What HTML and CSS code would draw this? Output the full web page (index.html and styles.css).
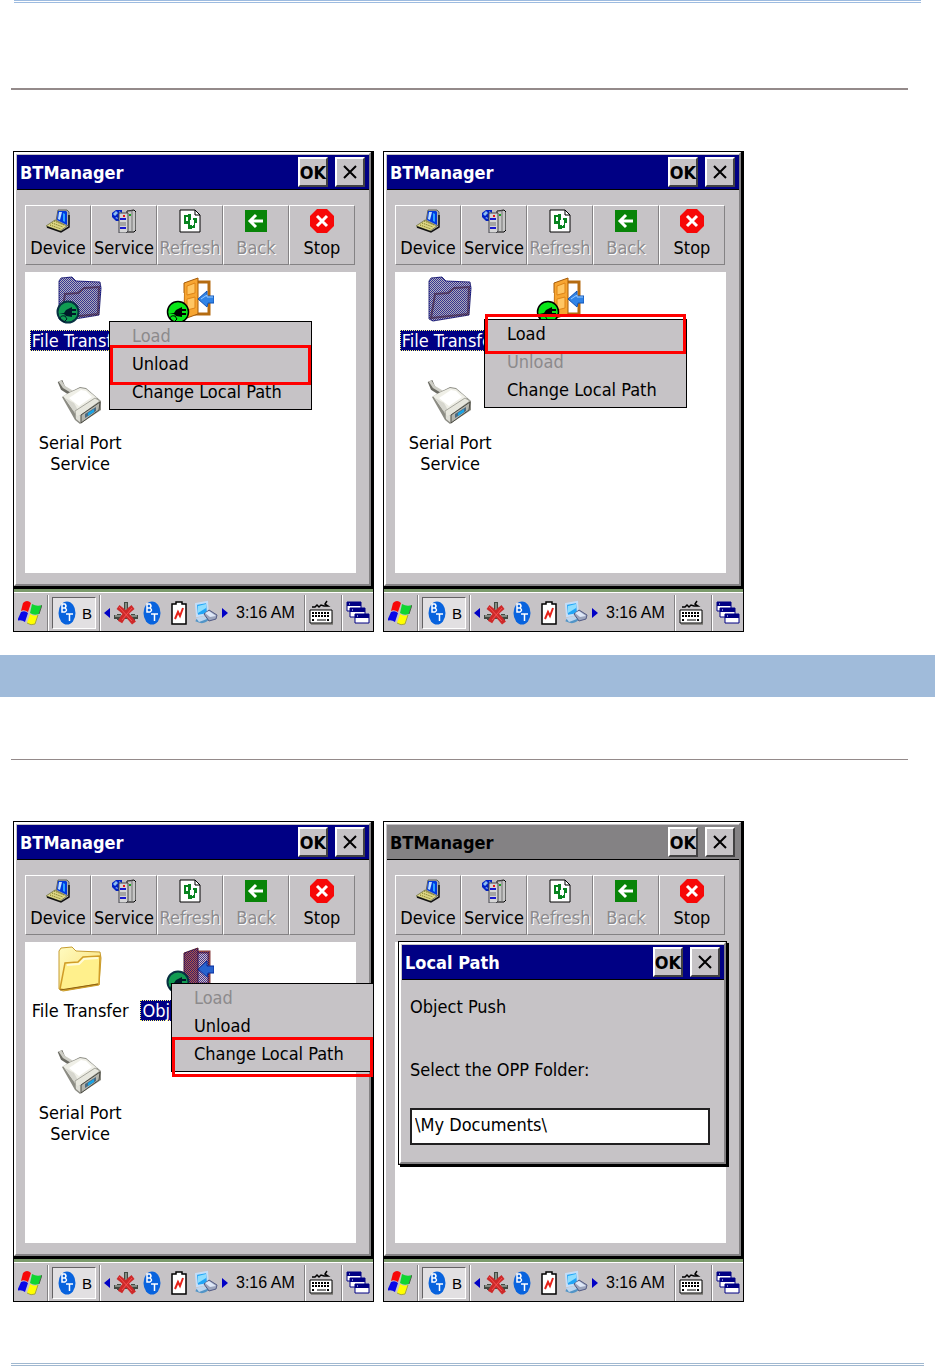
FILE: index.html
```html
<!DOCTYPE html>
<html lang="en">

<head>
  <meta charset="UTF-8">
  <title>BTManager</title>
  <link rel="stylesheet" href="styles.css">
</head>

<body>
  <svg class="defs" width="0" height="0" aria-hidden="true">
    <defs>
      <pattern id="checker" width="4" height="4" patternUnits="userSpaceOnUse">
        <path d="M0 0h1v1H0zM2 0h1v1H2zM1 1h1v1H1zM3 1h1v1H3zM0 2h1v1H0zM2 2h1v1H2zM1 3h1v1H1zM3 3h1v1H3z" fill="#000084" fill-opacity=".7" />
      </pattern>
      <linearGradient id="gold" x1="0" y1="0" x2="1" y2="1">
        <stop offset="0" stop-color="#fffbc0" />
        <stop offset="1" stop-color="#f8dc70" />
      </linearGradient>

      <path id="folder-shape" d="M3 5l2-3 11-1 4 4 24 1 1 6-2 27-36 6-4-2z" />
      <path id="door-shape" d="M18 7l14-5v4h11v32H32l-14 4z" />
      <path id="arrow-shape" d="M48 20v7h-6l-1 4-9-8 9-8v5z" />

      <symbol id="plug" viewBox="0 0 24 24">
        <circle cx="12" cy="12" r="10.5" fill="#08e718" stroke="#000" stroke-width="1.5" />
        <path d="M3 13h5l2-3 6-3v2h4v2h-4v2h4v2h-4v2l-6-1-2-2z" fill="#000" />
        <path d="M4 19q0-4 5-3l2 3-3 3z" fill="none" stroke="#000" />
      </symbol>

      <symbol id="plug-selected" viewBox="0 0 24 24">
        <circle cx="12" cy="12" r="10.5" fill="#109c52" stroke="#083142" stroke-width="2" />
        <path d="M3 13h5l2-3 6-3v2h4v2h-4v2h4v2h-4v2l-6-1-2-2z" fill="#001829" />
        <path d="M4 19q0-4 5-3l2 3-3 3z" fill="none" stroke="#001829" />
      </symbol>

      <symbol id="folder" viewBox="0 0 48 48">
        <use href="#folder-shape" fill="url(#gold)" stroke="#c69c30" />
        <path d="M4 43l5-26 13-1 5-5 17-1-1 28-34 6z" fill="#fff08c" stroke="#d09c28" stroke-width="1.5" />
        <path d="M11 19l12-1 5-5 14-1" fill="none" stroke="#fffbd8" stroke-width="2" />
        <path d="M4 44l38-6" stroke="#8c6010" />
      </symbol>

      <symbol id="folder-selected" viewBox="0 0 48 48">
        <use href="#folder-shape" fill="#b5b2bd" stroke="#31317b" />
        <path d="M5 42l4-24 13-1 6-5 15-1-1 27z" fill="#adaab5" stroke="#7b5a52" stroke-width="2" />
        <use href="#folder-shape" fill="url(#checker)" shape-rendering="crispEdges" />
      </symbol>

      <symbol id="door" viewBox="0 0 48 48">
        <path d="M30 6h13v32H30z" fill="#fff" stroke="#b56b10" stroke-width="3" />
        <path d="M18 7l14-5v36l-14 5z" fill="#f7a531" stroke="#a55a08" />
        <path d="M21 10l8-3v10l-8 2zM21 23l8-2v11l-8 2z" fill="#ffc663" stroke="#de8418" />
        <path d="M17 17l-1 22" stroke="#fff" stroke-width="2" />
        <use href="#arrow-shape" fill="#3184e7" stroke="#1052b5" />
        <path d="M35 23l6-4v2h6" fill="none" stroke="#9cceff" />
      </symbol>

      <symbol id="door-selected" viewBox="0 0 48 48">
        <path d="M30 6h13v32H30z" fill="#d6bcc0" stroke="#8a4042" stroke-width="3" />
        <path d="M18 7l14-5v36l-14 5z" fill="#b55a42" stroke="#4a1831" />
        <use href="#door-shape" fill="url(#checker)" shape-rendering="crispEdges" />
        <use href="#arrow-shape" fill="#2963ce" stroke="#082c9c" />
      </symbol>

      <symbol id="serial" viewBox="0 0 48 48">
        <path d="M4 3l3 7 9 6" fill="none" stroke="#6b6b63" stroke-width="5" />
        <path d="M4 3l4 6 10 6" fill="none" stroke="#cecec6" stroke-width="3" />
        <path d="M6 19l8-5 10-5 6 1 15 13v9L24 46l-5-4z" fill="#8c8c84" />
        <path d="M7 18l8-4 9-4 6 1 11 9-17 13-7-1z" fill="#efefe7" />
        <path d="M13 20l12-8 5 1 6 6-13 9z" fill="#fff" />
        <path d="M9 20l11 17 3-3-5-9z" fill="#d6d6ce" />
        <path d="M19 33l20-13 5 3-19 14-5 3z" fill="#e7e7de" stroke="#a5a59c" />
        <path d="M20 38l5-1v8l-5-4z" fill="#deded6" />
        <path d="M25 37l19-13-1 8-18 13z" fill="#b5b5ad" stroke="#4a4a42" />
        <path d="M29 36l11-7v4l-11 7z" fill="#4a6b84" />
        <path d="M32 35l6-4v3l-6 4z" fill="#18a5e7" />
      </symbol>

      <symbol id="device" viewBox="0 0 24 24">
        <path d="M12 1h9l2 2v12l-3 3-10-6z" fill="#adadad" stroke="#63635a" />
        <path d="M12 2h8l1 1v13l-10-5z" fill="#0039de" />
        <path d="M13 3h3l-2 8-2-1z" fill="#bddeff" />
        <path d="M17 4l2 1v8l-2-1z" fill="#29a5ff" />
        <path d="M0 17l9-6 12 6-7 5z" fill="#ded684" stroke="#84845a" />
        <path d="M4 16l11 4M6 14l11 4M8 12l10 4" stroke="#6b6b18" stroke-dasharray="1 1" />
        <path d="M1 18l14 5 8-5V6" fill="none" stroke="#101010" stroke-width="1.500" />
      </symbol>

      <symbol id="service" viewBox="0 0 24 24">
        <path d="M0 4l4-3h6v11H4L0 8z" fill="#0021c6" />
        <path d="M1 5l3-3 2 2-3 3zM7 2l3 2-2 2zM3 9l2-1 1 2z" fill="#8cbdef" />
        <path d="M15 2l7-1 2 2v18l-2 2h-7z" fill="#c6c6c6" stroke="#000" />
        <path d="M15 2h5v20" fill="none" stroke="#737373" />
        <path d="M7 4h9v18l-2 2H7z" fill="#d6d6d6" stroke="#42424a" />
        <path d="M8 10h6M8 19h6" stroke="#1818ce" stroke-width="2" />
        <path d="M8 14h6M8 16h6" stroke="#737373" />
        <path d="M11 7h2" stroke="#e71818" stroke-width="2" />
        <path d="M17 6h2" stroke="#18a518" stroke-width="2" />
      </symbol>

      <symbol id="refresh" viewBox="0 0 24 24">
        <path d="M2 1h15l5 5v17H2z" fill="#fff" stroke="#000" />
        <path d="M17 1v5h5z" fill="#fff" stroke="#000" />
        <path d="M12 7H7v7M16 10v8h-5" fill="none" stroke="#088421" stroke-width="2" />
        <path d="M10 5h3v8h-3zM15 9h4v5h-4zM6 12h6v3H6zM10 15h4v5h-4z" fill="#088421" />
        <path d="M12 11h4v5h-4z" fill="#fff" />
      </symbol>

      <symbol id="back" viewBox="0 0 24 24">
        <path d="M1 1h22v22H1z" fill="#088408" />
        <path d="M12 6l-6 6 6 6M7 12h12" fill="none" stroke="#fff" stroke-width="3" />
      </symbol>

      <symbol id="stop" viewBox="0 0 24 24">
        <path d="M7 0h10l7 7v10l-7 7H7l-7-7V7z" fill="#f70808" />
        <path d="M7 7l10 10M17 7L7 17" stroke="#fff" stroke-width="3" />
      </symbol>

      <symbol id="flag" viewBox="0 0 24 26">
        <path d="M5 3q4-4 8 0l-3 9q-4-3-7-1z" fill="#f70808" />
        <path d="M14 4q5 3 10 1l-3 9q-5 2-9-1z" fill="#10d631" />
        <path d="M3 12q4-2 7 1l-3 9q-4-3-8-1z" fill="#0808e7" />
        <path d="M12 14q4 3 8 1l-3 9q-4 2-8-1z" fill="#ffff00" />
        <path d="M20 15l-3 9q-4 2-8-1" fill="none" stroke="#a5a542" />
        <path d="M24 5l-3 9" fill="none" stroke="#52634a" />
      </symbol>

      <symbol id="bt" viewBox="0 0 20 26">
        <ellipse cx="10" cy="13" rx="8.5" ry="11.5" fill="#0863de" />
        <path d="M5 4v8h3q3-2 0-4 2-2 0-4zM5 8h3" fill="none" stroke="#fff" stroke-width="1.500" />
        <path d="M9 14h7M12.500 14v7" fill="none" stroke="#fff" stroke-width="1.500" />
      </symbol>

      <symbol id="network" viewBox="0 0 24 24">
        <path d="M12 1v12M0 16h24M5 13v6M19 13v7" stroke="#424a42" stroke-width="4" />
        <path d="M12 2v11M1 15h22" stroke="#c6cec6" />
        <path d="M4 6q7 5 16 16M19 6q-8 6-13 15" fill="none" stroke="#ce2929" stroke-width="5" />
        <path d="M5 6l13 14M18 7L8 19" stroke="#f75252" />
      </symbol>

      <symbol id="battery" viewBox="0 0 24 26">
        <path d="M10 4V2h6v2h4v20H6V4z" fill="#fff" stroke="#000" stroke-width="1.500" />
        <path d="M9 19l3-7 2 4 3-8" fill="none" stroke="#e72118" stroke-width="2" />
      </symbol>

      <symbol id="computers" viewBox="0 0 24 24">
        <path d="M2 3l11-2 1 12-11 2z" fill="#21a5f7" stroke="#c6def7" stroke-width="2" />
        <path d="M4 5l8-2v4L4 12z" fill="#8cdeff" />
        <path d="M2 19q8 4 12-2l5-2" fill="none" stroke="#5294c6" stroke-width="3" />
        <path d="M10 13l5-4 8 5-1 4-7 2z" fill="#9ca5bd" stroke="#525a84" />
        <path d="M11 12l4-2 7 5-6 1z" fill="#dee7f7" />
        <path d="M2 17l8-2 3 3-8 3z" fill="#bdd6ef" />
      </symbol>

      <symbol id="keyboard" viewBox="0 0 24 26">
        <path d="M3 7h3l2-2 2 2 2-2 3 1h4l-3-2 2-3" fill="none" stroke="#000" stroke-width="1.500" />
        <path d="M1 10h22v13H1z" fill="#fff" stroke="#000" />
        <path d="M3 13h18M3 16h18M3 20h3M18 20h3" stroke="#000" stroke-width="2" stroke-dasharray="2 1" />
        <path d="M8 20h9" stroke="#000" />
        <path d="M2 24h22V12" fill="none" stroke="#52524a" />
      </symbol>

      <symbol id="desktop" viewBox="0 0 24 24">
        <path d="M1 1h14v9H1z" fill="#fff" stroke="#000084" />
        <path d="M1 1h14v4H1z" fill="#000084" />
        <path d="M4 7h15v9H4z" fill="#fff" stroke="#000084" />
        <path d="M4 7h15v4H4z" fill="#000084" />
        <path d="M9 13h14v9H9z" fill="#fff" stroke="#000084" />
        <path d="M9 13h14v4H9z" fill="#000084" />
        <path d="M3 3h1M6 9h1M11 15h1" stroke="#fff" />
      </symbol>

      <symbol id="close" viewBox="0 0 16 16">
        <path d="M2 2l12 12M14 2L2 14" stroke="#000" stroke-width="2" />
      </symbol>
    </defs>
  </svg>

  <header class="page-rule"></header>

  <main>
    <section class="step step-first">
      <hr class="thick">
      <div class="screens">

        <!-- File Transfer loaded -->
        <div class="screen">
          <div class="window">
            <div class="titlebar">
              <h2>BTManager</h2>
              <button class="caption">OK</button>
              <button class="caption" aria-label="Close"><svg><use href="#close" /></svg></button>
            </div>
            <div class="content">
              <div class="toolbar">
                <button><svg><use href="#device" /></svg>Device</button>
                <button><svg><use href="#service" /></svg>Service</button>
                <button disabled><svg><use href="#refresh" /></svg>Refresh</button>
                <button disabled><svg><use href="#back" /></svg>Back</button>
                <button><svg><use href="#stop" /></svg>Stop</button>
              </div>
              <ul class="services">
                <li class="selected">
                  <svg class="icon"><use href="#folder-selected" /></svg>
                  <svg class="badge"><use href="#plug-selected" /></svg>
                  <span>File Transfer</span>
                </li>
                <li>
                  <svg class="icon"><use href="#door" /></svg>
                  <svg class="badge"><use href="#plug" /></svg>
                </li>
                <li><svg class="icon"><use href="#serial" /></svg><span>Serial Port Service</span></li>
              </ul>
            </div>
          </div>
          <div class="taskbar">
            <button class="start" aria-label="Start"><svg><use href="#flag" /></svg></button>
            <div class="tasks"><button class="task"><svg><use href="#bt" /></svg>B</button></div>
            <div class="tray">
              <i class="arrow arrow-left"></i>
              <svg><use href="#network" /></svg>
              <svg class="narrow"><use href="#bt" /></svg>
              <svg><use href="#battery" /></svg>
              <svg><use href="#computers" /></svg>
              <i class="arrow arrow-right"></i>
              <time>3:16 AM</time>
            </div>
            <button class="tool" aria-label="Input panel"><svg><use href="#keyboard" /></svg></button>
            <button class="tool" aria-label="Desktop"><svg><use href="#desktop" /></svg></button>
          </div>
          <div class="menu menu-unload">
            <button disabled>Load</button>
            <button>Unload</button>
            <button>Change Local Path</button>
            <i class="marker"></i>
          </div>
        </div>

        <!-- File Transfer not loaded -->
        <div class="screen">
          <div class="window">
            <div class="titlebar">
              <h2>BTManager</h2>
              <button class="caption">OK</button>
              <button class="caption" aria-label="Close"><svg><use href="#close" /></svg></button>
            </div>
            <div class="content">
              <div class="toolbar">
                <button><svg><use href="#device" /></svg>Device</button>
                <button><svg><use href="#service" /></svg>Service</button>
                <button disabled><svg><use href="#refresh" /></svg>Refresh</button>
                <button disabled><svg><use href="#back" /></svg>Back</button>
                <button><svg><use href="#stop" /></svg>Stop</button>
              </div>
              <ul class="services">
                <li class="selected"><svg class="icon"><use href="#folder-selected" /></svg><span>File Transfer</span></li>
                <li>
                  <svg class="icon"><use href="#door" /></svg>
                  <svg class="badge"><use href="#plug" /></svg>
                </li>
                <li><svg class="icon"><use href="#serial" /></svg><span>Serial Port Service</span></li>
              </ul>
            </div>
          </div>
          <div class="taskbar">
            <button class="start" aria-label="Start"><svg><use href="#flag" /></svg></button>
            <div class="tasks"><button class="task"><svg><use href="#bt" /></svg>B</button></div>
            <div class="tray">
              <i class="arrow arrow-left"></i>
              <svg><use href="#network" /></svg>
              <svg class="narrow"><use href="#bt" /></svg>
              <svg><use href="#battery" /></svg>
              <svg><use href="#computers" /></svg>
              <i class="arrow arrow-right"></i>
              <time>3:16 AM</time>
            </div>
            <button class="tool" aria-label="Input panel"><svg><use href="#keyboard" /></svg></button>
            <button class="tool" aria-label="Desktop"><svg><use href="#desktop" /></svg></button>
          </div>
          <div class="menu menu-load">
            <button>Load</button>
            <button disabled>Unload</button>
            <button>Change Local Path</button>
            <i class="marker"></i>
          </div>
        </div>

      </div>
    </section>

    <div class="band"></div>

    <section class="step">
      <hr>
      <div class="screens">

        <!-- Object Push menu -->
        <div class="screen">
          <div class="window">
            <div class="titlebar">
              <h2>BTManager</h2>
              <button class="caption">OK</button>
              <button class="caption" aria-label="Close"><svg><use href="#close" /></svg></button>
            </div>
            <div class="content">
              <div class="toolbar">
                <button><svg><use href="#device" /></svg>Device</button>
                <button><svg><use href="#service" /></svg>Service</button>
                <button disabled><svg><use href="#refresh" /></svg>Refresh</button>
                <button disabled><svg><use href="#back" /></svg>Back</button>
                <button><svg><use href="#stop" /></svg>Stop</button>
              </div>
              <ul class="services">
                <li><svg class="icon"><use href="#folder" /></svg><span>File Transfer</span></li>
                <li class="selected">
                  <svg class="icon"><use href="#door-selected" /></svg>
                  <svg class="badge"><use href="#plug-selected" /></svg>
                  <span class="covered">Obj</span>
                </li>
                <li><svg class="icon"><use href="#serial" /></svg><span>Serial Port Service</span></li>
              </ul>
            </div>
          </div>
          <div class="taskbar">
            <button class="start" aria-label="Start"><svg><use href="#flag" /></svg></button>
            <div class="tasks"><button class="task"><svg><use href="#bt" /></svg>B</button></div>
            <div class="tray">
              <i class="arrow arrow-left"></i>
              <svg><use href="#network" /></svg>
              <svg class="narrow"><use href="#bt" /></svg>
              <svg><use href="#battery" /></svg>
              <svg><use href="#computers" /></svg>
              <i class="arrow arrow-right"></i>
              <time>3:16 AM</time>
            </div>
            <button class="tool" aria-label="Input panel"><svg><use href="#keyboard" /></svg></button>
            <button class="tool" aria-label="Desktop"><svg><use href="#desktop" /></svg></button>
          </div>
          <div class="menu menu-path">
            <button disabled>Load</button>
            <button>Unload</button>
            <button>Change Local Path</button>
            <i class="marker"></i>
          </div>
        </div>

        <!-- Local Path dialog -->
        <div class="screen">
          <div class="window">
            <div class="titlebar inactive">
              <h2>BTManager</h2>
              <button class="caption">OK</button>
              <button class="caption" aria-label="Close"><svg><use href="#close" /></svg></button>
            </div>
            <div class="content">
              <div class="toolbar">
                <button><svg><use href="#device" /></svg>Device</button>
                <button><svg><use href="#service" /></svg>Service</button>
                <button disabled><svg><use href="#refresh" /></svg>Refresh</button>
                <button disabled><svg><use href="#back" /></svg>Back</button>
                <button><svg><use href="#stop" /></svg>Stop</button>
              </div>
              <ul class="services"></ul>
            </div>
          </div>
          <div class="taskbar">
            <button class="start" aria-label="Start"><svg><use href="#flag" /></svg></button>
            <div class="tasks"><button class="task"><svg><use href="#bt" /></svg>B</button></div>
            <div class="tray">
              <i class="arrow arrow-left"></i>
              <svg><use href="#network" /></svg>
              <svg class="narrow"><use href="#bt" /></svg>
              <svg><use href="#battery" /></svg>
              <svg><use href="#computers" /></svg>
              <i class="arrow arrow-right"></i>
              <time>3:16 AM</time>
            </div>
            <button class="tool" aria-label="Input panel"><svg><use href="#keyboard" /></svg></button>
            <button class="tool" aria-label="Desktop"><svg><use href="#desktop" /></svg></button>
          </div>
          <form class="window dialog">
            <div class="titlebar">
              <h2>Local Path</h2>
              <button type="button" class="caption">OK</button>
              <button type="button" class="caption" aria-label="Close"><svg><use href="#close" /></svg></button>
            </div>
            <div class="fields">
              <p>Object Push</p>
              <label for="opp-folder">Select the OPP Folder:</label>
              <input type="text" id="opp-folder" value="\My Documents\">
            </div>
          </form>
        </div>

      </div>
    </section>
  </main>

  <footer class="page-rule"></footer>
</body>

</html>
```

FILE: styles.css
```css
* {
  box-sizing: border-box;
}

body {
  margin: 0;
  background: #fff;
  color: #000;
  font-family: "DejaVu Sans Condensed", "Noto Sans", sans-serif;
  font-size: 18px;
  line-height: 21px;
}

button,
input {
  font: inherit;
  color: inherit;
}

button {
  margin: 0;
  padding: 0;
  border: 0;
  background: none;
}

svg {
  display: block;
  width: 24px;
  height: 24px;
  overflow: visible;
}

.defs {
  position: absolute;
  width: 0;
  height: 0;
}

/* page furniture */

.page-rule {
  margin: 0 14px;
  border-top: 3px double #9dbbe0;
}

footer.page-rule {
  margin: 0 11px;
  border-color: #a0b8d0;
}

hr {
  margin: 0 27px 61px 11px;
  border: 0;
  border-top: 1px solid #948a8a;
}

hr.thick {
  border-top-width: 2px;
}

.step {
  padding: 62px 0 61px;
}

.step-first {
  padding: 85px 0 23px;
}

.screens {
  display: grid;
  grid-template-columns: repeat(2, minmax(0, 361px));
  gap: 9px;
  padding: 0 13px;
}

.band {
  height: 42px;
  background: #a0bbda;
}

/* device screen */

.screen {
  position: relative;
  border: 1px solid #000;
  background: #000;
}

.window {
  margin-right: 2px;
  padding: 1px 0 0 1px;
  border: 2px solid;
  border-color: #fff #848284 #848284 #fff;
  background: #c6c3c6;
}

.titlebar {
  display: flex;
  align-items: center;
  gap: 7px;
  height: 35px;
  padding: 0 4px 0 3px;
  border-bottom: 1px solid #000;
  background: #000084;
  color: #fff;
}

.titlebar h2 {
  flex: 1;
  margin: 0;
  font-size: 18px;
}

.titlebar.inactive {
  background: #848284;
  color: #000;
}

.caption {
  display: flex;
  align-items: center;
  justify-content: center;
  width: 30px;
  height: 30px;
  border: 2px solid;
  border-color: #fff #424142 #424142 #fff;
  background: #c6c3c6;
  color: #000;
  font-weight: bold;
}

.caption svg {
  width: 16px;
  height: 16px;
}

.content {
  padding: 15px 13px 11px 8px;
}

.toolbar {
  display: grid;
  grid-template-columns: repeat(5, 1fr);
  margin-right: 1px;
}

.toolbar button {
  display: flex;
  flex-direction: column;
  align-items: center;
  gap: 4px;
  height: 60px;
  padding-top: 3px;
  border: 1px solid;
  border-color: #fff #848284 #848284 #fff;
}

.toolbar button:disabled {
  color: #8c8a8c;
  text-shadow: 1px 1px #fff;
}

.services {
  display: grid;
  grid-template-columns: repeat(3, 1fr);
  grid-auto-rows: 102px;
  min-height: 301px;
  margin: 7px 0 0;
  padding: 4px 0 0;
  background: #fff;
  list-style: none;
}

.services li {
  position: relative;
  display: flex;
  flex-direction: column;
  align-items: center;
  gap: 6px;
  padding: 0 2px;
  text-align: center;
}

.services li:nth-child(3) {
  grid-row: 2;
}

.services .icon {
  width: 48px;
  height: 48px;
}

.services li:nth-child(3) span {
  width: 90px;
}

/* plug sign over the lower left corner of an icon */
.badge {
  position: absolute;
  top: 24px;
  left: 31px;
}

.services .selected span {
  padding: 0 2px;
  outline: 1px dotted #ffff7b;
  outline-offset: -1px;
  background: #000084;
  color: #fff;
  white-space: nowrap;
}

/* label mostly under the popup menu */
.services .selected .covered {
  width: 100px;
  text-align: left;
}

/* taskbar */

.taskbar {
  display: flex;
  align-items: stretch;
  height: 42px;
  margin-top: 3px;
  padding-top: 3px;
  border-top: 3px solid #7b9a6b;
  background: #c6c3c6;
  box-shadow: inset 0 1px #fff;
}

.start,
.tasks,
.tray {
  display: flex;
  align-items: center;
  border-right: 1px solid #848284;
  box-shadow: 1px 0 #fff;
}

.taskbar svg {
  flex: none;
  height: 26px;
}

.taskbar .narrow {
  width: 20px;
}

.start {
  width: 34px;
  padding-left: 4px;
}

.tasks {
  width: 52px;
  padding-left: 4px;
}

.task {
  display: flex;
  align-items: center;
  gap: 5px;
  width: 44px;
  height: 32px;
  padding-left: 4px;
  border: 1px solid;
  border-color: #636163 #fff #fff #636163;
  background: #e2e0e2;
  font: 15px "Liberation Sans", sans-serif;
}

.task svg {
  width: 20px;
}

.tray {
  flex: 1;
  gap: 4px;
  padding-left: 4px;
}

.tray time {
  margin-left: 4px;
  font: 16px "Liberation Sans", sans-serif;
}

.arrow {
  flex: none;
  border: 5px solid transparent;
}

.arrow-left {
  border-left: 0;
  border-right: 6px solid #0000c6;
}

.arrow-right {
  border-right: 0;
  border-left: 6px solid #0000c6;
}

.tool {
  display: flex;
  align-items: center;
  width: 36px;
  padding-left: 4px;
}

.tool + .tool {
  width: 32px;
  border-left: 1px solid #848284;
  box-shadow: inset 1px 0 #fff;
}

/* popup menus */

.menu {
  position: absolute;
  display: flex;
  flex-direction: column;
  width: 203px;
  padding-bottom: 3px;
  border: 1px solid #000;
  background: #c6c3c6;
}

.menu button {
  height: 28px;
  padding: 0 0 2px 22px;
  text-align: left;
}

.menu button:disabled {
  color: #8c8a8c;
}

.menu-unload {
  top: 169px;
  left: 95px;
}

.menu-load {
  top: 167px;
  left: 100px;
}

.menu-path {
  top: 161px;
  left: 157px;
}

.marker {
  position: absolute;
  left: 0;
  width: 201px;
  height: 40px;
  border: 3px solid #f00;
}

.menu-unload .marker {
  top: 23px;
}

.menu-load .marker {
  top: -6px;
}

.menu-path .marker {
  top: 53px;
}

/* Local Path dialog */

.dialog {
  position: absolute;
  top: 120px;
  left: 15px;
  right: 17px;
  margin: 0;
  box-shadow: 0 0 0 1px #000, 2px 2px 0 1px #000;
}

.fields {
  display: flex;
  flex-direction: column;
  padding: 16px 14px 17px 8px;
}

.fields p {
  margin: 0 0 42px;
}

.fields label {
  margin-bottom: 28px;
}

.fields input {
  width: 100%;
  height: 37px;
  padding: 0 3px 4px;
  border: 2px solid #212021;
  border-radius: 0;
  background: #fff;
}
```
